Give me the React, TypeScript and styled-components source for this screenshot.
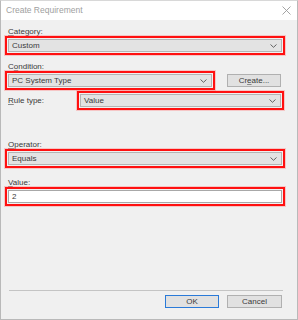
import styled, { createGlobalStyle } from "styled-components";

const Global = createGlobalStyle`
  html, body { margin: 0; padding: 0; background: #fff; }
  * { box-sizing: border-box; }
`;

const Window = styled.div`
  width: 298px;
  height: 320px;
  display: flex;
  flex-direction: column;
  background: #f0f0f0;
  border: 1px solid #b9b9b9;
  border-top-color: #d8d8d8;
  font-family: "Liberation Sans", Arial, sans-serif;
  font-size: 8px;
  color: #3a3a3a;
`;

const TitleBar = styled.div`
  height: 19px;
  flex: none;
  display: flex;
  align-items: center;
  justify-content: space-between;
  background: #fff;
  padding: 0 6px 1px 5px;
  color: #a0a0a0;
  font-size: 8.5px;
`;

const Body = styled.div`
  flex: 1;
  display: flex;
  flex-direction: column;
  padding: 0 12px 0 4px;
`;

const Label = styled.div<{ $top: number }>`
  height: 9px;
  line-height: 9px;
  margin-top: ${(p) => p.$top}px;
  padding-left: 3px;
  white-space: nowrap;
  u { text-decoration-thickness: 1px; text-underline-offset: 1px; text-decoration-color: #888; }
`;

const Row = styled.div<{ $top?: number }>`
  display: flex;
  align-items: center;
  margin-top: ${(p) => p.$top ?? 0}px;
`;

const Mark = styled.div<{ $width?: number }>`
  height: 19px;
  width: ${(p) => (p.$width ? `${p.$width}px` : "100%")};
  flex: none;
  border: 2px solid #ff1010;
  box-shadow: 0 0 0 1px rgba(255, 120, 120, 0.35);
  padding: 1px;
`;

const Select = styled.div`
  height: 100%;
  display: flex;
  align-items: center;
  justify-content: space-between;
  background: #e3e3e3;
  border: 1px solid #b4b4b4;
  padding: 0 4px 0 3px;
`;

const TextBox = styled.div`
  height: 100%;
  display: flex;
  align-items: center;
  background: #fff;
  border: 1px solid #a8a8a8;
  padding: 0 3px;
`;

const SideLabel = styled.div`
  width: 72px;
  flex: none;
  padding-left: 3px;
  u { text-decoration-thickness: 1px; text-underline-offset: 1px; text-decoration-color: #888; }
`;

const Button = styled.div<{ $default?: boolean; $width: number }>`
  width: ${(p) => p.$width}px;
  height: 13px;
  flex: none;
  display: flex;
  align-items: center;
  justify-content: center;
  background: #e1e1e1;
  border: 1px solid ${(p) => (p.$default ? "#2a7ad8" : "#b0b0b0")};
  u { text-decoration-color: #888; }
`;

const CreateButton = styled(Button)`
  margin-right: 4px;
`;

const Footer = styled.div`
  margin-top: auto;
  display: flex;
  flex-direction: column;
  padding: 0 0 11px 8px;
`;

const Separator = styled.div`
  height: 1px;
  width: 274px;
  background: #c4c4c4;
  margin-bottom: 4px;
`;

const Buttons = styled.div`
  display: flex;
  justify-content: flex-end;
  gap: 8px;
  width: 273px;
`;

const Chevron = () => (
  <svg width="7" height="4" viewBox="0 0 7 4">
    <path d="M0.5 0.5 L3.5 3.3 L6.5 0.5" fill="none" stroke="#555" strokeWidth="0.9" />
  </svg>
);

const Close = () => (
  <svg width="9" height="9" viewBox="0 0 9 9">
    <path d="M0.5 0.5 L8.5 8.5 M8.5 0.5 L0.5 8.5" stroke="#9a9a9a" strokeWidth="0.9" />
  </svg>
);

const Dropdown = ({ value }: { value: string }) => (
  <Select>
    <span>{value}</span>
    <Chevron />
  </Select>
);

export default function App() {
  return (
    <>
      <Global />
      <Window>
        <TitleBar>
          <span>Create Requirement</span>
          <Close />
        </TitleBar>
        <Body>
          <Label $top={7}>
            <u>C</u>ategory:
          </Label>
          <Mark>
            <Dropdown value="Custom" />
          </Mark>

          <Label $top={7}>
            C<u>o</u>ndition:
          </Label>
          <Row>
            <Mark $width={210}>
              <Dropdown value="PC System Type" />
            </Mark>
            <div style={{ flex: 1 }} />
            <CreateButton $width={54}>
              Cr<u>e</u>ate...
            </CreateButton>
          </Row>

          <Row $top={1}>
            <SideLabel>
              <u>R</u>ule type:
            </SideLabel>
            <Mark $width={207}>
              <Dropdown value="Value" />
            </Mark>
          </Row>

          <Label $top={30}>
            <u>O</u>perator:
          </Label>
          <Mark>
            <Dropdown value="Equals" />
          </Mark>

          <Label $top={10}>
            <u>V</u>alue:
          </Label>
          <Mark>
            <TextBox>2</TextBox>
          </Mark>
        </Body>
        <Footer>
          <Separator />
          <Buttons>
            <Button $default $width={54}>
              OK
            </Button>
            <Button $width={55}>Cancel</Button>
          </Buttons>
        </Footer>
      </Window>
    </>
  );
}
